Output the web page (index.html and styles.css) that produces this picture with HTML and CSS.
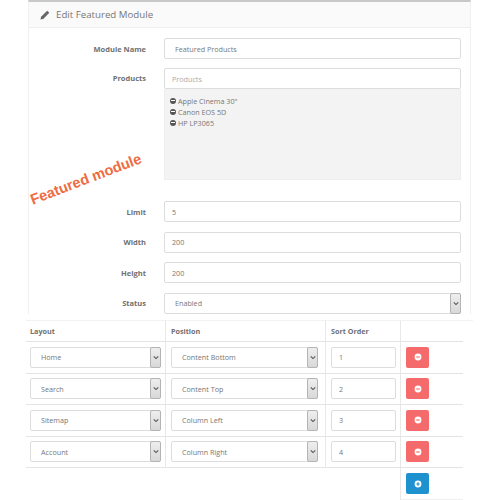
FILE: index.html
```html
<!DOCTYPE html>
<html lang="en">
<head>
    <meta charset="UTF-8">
    <title>Edit Featured Module</title>
    <link rel="stylesheet" href="styles.css">
</head>
<body>

<div class="panel">
    <div class="panel-heading">
        <svg class="pencil" viewBox="0 0 12 12"><path d="M8.6 0.8 11.2 3.4 3.9 10.7 0.6 11.4 1.3 8.1Z"/></svg>
        <span>Edit Featured Module</span>
    </div>
    <div class="panel-body">
        <div class="row">
            <label>Module Name</label>
            <input class="field indent" type="text" value="Featured Products">
        </div>
        <div class="row products-row">
            <label>Products</label>
            <div class="products">
                <input class="field" type="text" placeholder="Products">
                <div class="well">
                    <div class="well-item"><span class="remove-dot"></span>Apple Cinema 30"</div>
                    <div class="well-item"><span class="remove-dot"></span>Canon EOS 5D</div>
                    <div class="well-item"><span class="remove-dot"></span>HP LP3065</div>
                </div>
            </div>
        </div>
        <div class="row">
            <label>Limit</label>
            <input class="field" type="text" value="5">
        </div>
        <div class="row">
            <label>Width</label>
            <input class="field" type="text" value="200">
        </div>
        <div class="row">
            <label>Height</label>
            <input class="field" type="text" value="200">
        </div>
        <div class="row">
            <label>Status</label>
            <div class="select-wrap">
                <select><option>Enabled</option></select>
                <span class="arrow"><svg viewBox="0 0 8 6"><path d="M1 1.5 4 4.5 7 1.5"/></svg></span>
            </div>
        </div>
    </div>
    <div class="stamp">Featured module</div>
</div>

<div class="layouts">
    <div class="cell head">Layout</div>
    <div class="cell head">Position</div>
    <div class="cell head">Sort Order</div>
    <div class="cell head"></div>

    <div class="cell">
        <div class="select-wrap"><select><option>Home</option></select><span class="arrow"><svg viewBox="0 0 8 6"><path d="M1 1.5 4 4.5 7 1.5"/></svg></span></div>
    </div>
    <div class="cell">
        <div class="select-wrap"><select><option>Content Bottom</option></select><span class="arrow"><svg viewBox="0 0 8 6"><path d="M1 1.5 4 4.5 7 1.5"/></svg></span></div>
    </div>
    <div class="cell"><input class="field num" type="text" value="1"></div>
    <div class="cell"><button class="btn btn-red"><svg viewBox="0 0 10 10"><circle cx="5" cy="5" r="3.4"/><path class="minus" d="M3.3 5H6.7"/></svg></button></div>

    <div class="cell">
        <div class="select-wrap"><select><option>Search</option></select><span class="arrow"><svg viewBox="0 0 8 6"><path d="M1 1.5 4 4.5 7 1.5"/></svg></span></div>
    </div>
    <div class="cell">
        <div class="select-wrap"><select><option>Content Top</option></select><span class="arrow"><svg viewBox="0 0 8 6"><path d="M1 1.5 4 4.5 7 1.5"/></svg></span></div>
    </div>
    <div class="cell"><input class="field num" type="text" value="2"></div>
    <div class="cell"><button class="btn btn-red"><svg viewBox="0 0 10 10"><circle cx="5" cy="5" r="3.4"/><path class="minus" d="M3.3 5H6.7"/></svg></button></div>

    <div class="cell">
        <div class="select-wrap"><select><option>Sitemap</option></select><span class="arrow"><svg viewBox="0 0 8 6"><path d="M1 1.5 4 4.5 7 1.5"/></svg></span></div>
    </div>
    <div class="cell">
        <div class="select-wrap"><select><option>Column Left</option></select><span class="arrow"><svg viewBox="0 0 8 6"><path d="M1 1.5 4 4.5 7 1.5"/></svg></span></div>
    </div>
    <div class="cell"><input class="field num" type="text" value="3"></div>
    <div class="cell"><button class="btn btn-red"><svg viewBox="0 0 10 10"><circle cx="5" cy="5" r="3.4"/><path class="minus" d="M3.3 5H6.7"/></svg></button></div>

    <div class="cell">
        <div class="select-wrap"><select><option>Account</option></select><span class="arrow"><svg viewBox="0 0 8 6"><path d="M1 1.5 4 4.5 7 1.5"/></svg></span></div>
    </div>
    <div class="cell">
        <div class="select-wrap"><select><option>Column Right</option></select><span class="arrow"><svg viewBox="0 0 8 6"><path d="M1 1.5 4 4.5 7 1.5"/></svg></span></div>
    </div>
    <div class="cell"><input class="field num" type="text" value="4"></div>
    <div class="cell"><button class="btn btn-red"><svg viewBox="0 0 10 10"><circle cx="5" cy="5" r="3.4"/><path class="minus" d="M3.3 5H6.7"/></svg></button></div>

    <div class="cell wide"></div>
    <div class="cell last"><button class="btn btn-blue"><svg viewBox="0 0 10 10"><circle cx="5" cy="5" r="3.4"/><path class="minus" d="M3.3 5H6.7M5 3.3V6.7"/></svg></button></div>
</div>

</body>
</html>
```

FILE: styles.css
```css
* {
    box-sizing: border-box;
}
body {
    margin: 0;
    background: #fff;
    font-family: 'Open Sans', sans-serif;
    font-size: 7.2px;
    color: #777;
}
.panel {
    position: relative;
    width: 443px;
    height: 314px;
    margin-left: 28px;
    border: 1px solid #f0f0f0;
    border-top: 2px solid #c8c8c8;
    border-bottom: none;
}
.panel-heading {
    display: flex;
    align-items: center;
    gap: 6px;
    height: 26px;
    padding-left: 11px;
    background: #fafafa;
    border-bottom: 1px solid #eee;
    font-size: 9.7px;
    color: #777;
}
.pencil {
    width: 10px;
    height: 10px;
    fill: #666;
}
.panel-body {
    padding: 10px 9px 0 0;
}
.row {
    display: flex;
    align-items: center;
    height: 21px;
    margin-bottom: 9.5px;
}
.row:first-child {
    margin-bottom: 9px;
}
.row label {
    flex: none;
    width: 117px;
    margin-right: 18px;
    text-align: right;
    font-size: 7.5px;
    font-weight: bold;
    color: #707070;
}
.products-row {
    align-items: flex-start;
    height: 112px;
    margin-bottom: 21px;
}
.products-row label {
    line-height: 21px;
}
.products {
    flex: 1;
}
.field {
    display: block;
    width: 100%;
    height: 21px;
    padding: 0 7px;
    border: 1px solid #ddd;
    border-radius: 2px;
    background: #fff;
    font-family: inherit;
    font-size: 7.2px;
    color: #777;
}
.field::placeholder {
    color: #aaa;
}
.indent {
    padding-left: 10px;
}
.num {
    padding-left: 7px;
}
.well {
    height: 91px;
    padding: 6px 5px 0;
    background: #f3f3f3;
    border: 1px solid #eee;
    border-top: none;
    color: #777;
}
.well-item {
    display: flex;
    align-items: center;
    gap: 2px;
    height: 11px;
}
.remove-dot {
    position: relative;
    width: 6px;
    height: 6px;
    border-radius: 50%;
    background: #555;
}
.remove-dot::after {
    content: "";
    position: absolute;
    left: 1px;
    right: 1px;
    top: 2.5px;
    height: 1px;
    background: #fff;
}
.select-wrap {
    position: relative;
    flex: 1;
    width: 100%;
    height: 21px;
}
.select-wrap select {
    display: block;
    width: 100%;
    height: 21px;
    padding: 0 10px;
    border: 1px solid #ddd;
    border-radius: 2px;
    background: #fff;
    appearance: none;
    font-family: inherit;
    font-size: 7.2px;
    color: #777;
}
.arrow {
    position: absolute;
    right: 0;
    top: 0;
    display: flex;
    align-items: center;
    justify-content: center;
    width: 11px;
    height: 21px;
    background: linear-gradient(#eee, #d8d8d8);
    border: 1px solid #b4b4b4;
    border-radius: 2px;
}
.arrow svg {
    width: 6px;
    height: 5px;
    fill: none;
    stroke: #555;
    stroke-width: 1.4;
}
.stamp {
    position: absolute;
    left: -2px;
    top: 169px;
    font-family: 'Liberation Sans', sans-serif;
    font-size: 14.6px;
    font-weight: bold;
    color: #ee6c42;
    white-space: nowrap;
    transform: rotate(-21deg);
}
.layouts {
    display: grid;
    grid-template-columns: 140px 160px 75px 62px;
    grid-template-rows: 21px repeat(4, 31.5px) 32px;
    width: 447px;
    margin: 6px 0 0 26px;
    border-top: 1px solid #f2f2f2;
}
.cell {
    display: flex;
    align-items: center;
    padding: 0 4px 0 5px;
    border-right: 1px solid #e8e8e8;
    border-bottom: 1px solid #e4e4e4;
}
.cell:nth-child(4n+1) {
    padding-left: 4px;
}
.cell:nth-child(4n+2) {
    padding-right: 7px;
}
.cell:nth-child(4n) {
    border-right: none;
}
.head {
    font-weight: bold;
    color: #707070;
}
.btn {
    display: flex;
    align-items: center;
    justify-content: center;
    width: 23px;
    height: 21px;
    padding: 0;
    border: none;
    border-radius: 2px;
}
.btn svg {
    width: 10px;
    height: 10px;
    fill: #fff;
}
.btn .minus {
    fill: none;
    stroke-width: 1.2;
}
.btn-red {
    background: #f56b6b;
}
.btn-red .minus {
    stroke: #f56b6b;
}
.btn-blue {
    background: #1e91cf;
}
.btn-blue .minus {
    stroke: #1e91cf;
}
.wide {
    grid-column: span 3;
    border-bottom: none;
}
.last {
    border-right: none;
    border-bottom: 1px solid #f0f0f0;
}
```
